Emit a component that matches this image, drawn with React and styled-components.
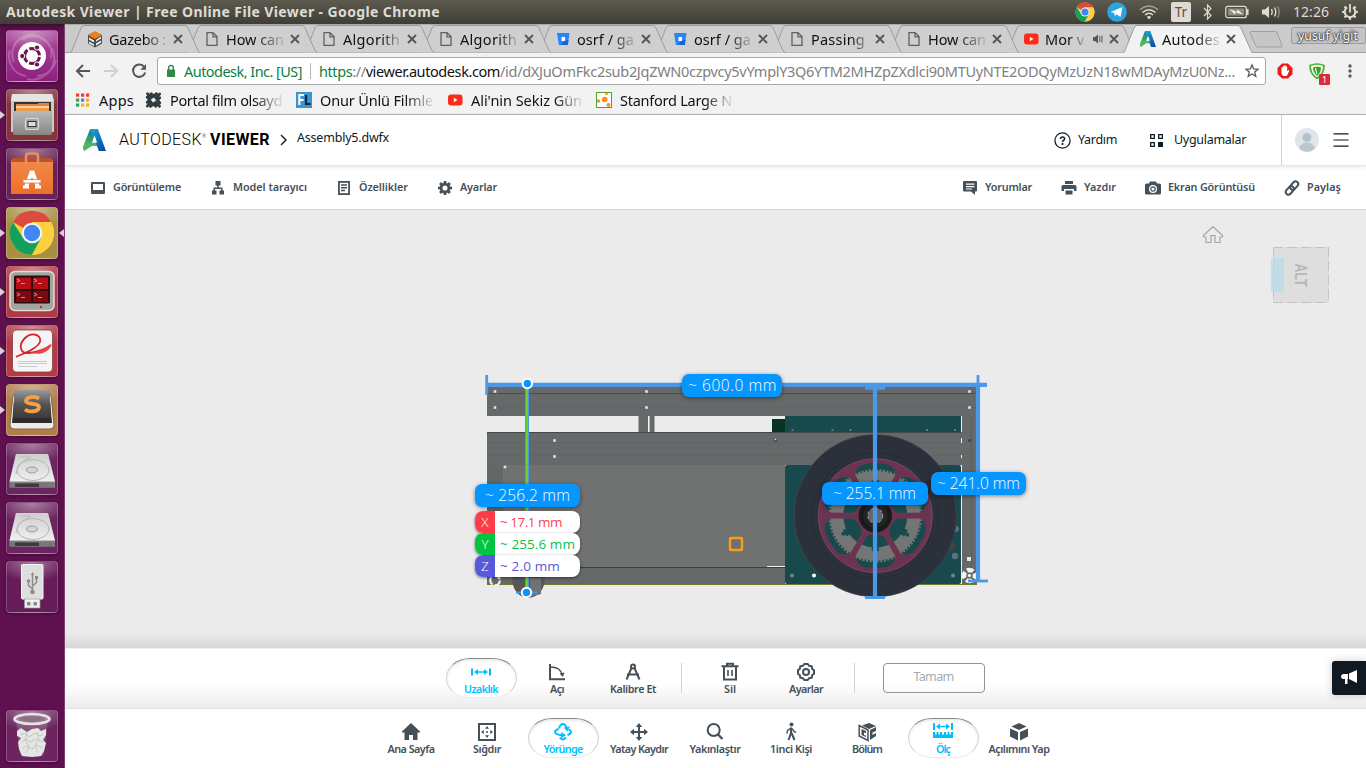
import React, { useLayoutEffect, useRef, useState } from 'react';
import styled, { createGlobalStyle, css } from 'styled-components';

const ubuntu = '"Noto Sans", "Open Sans", sans-serif';
const artifakt = '"Noto Sans", "Open Sans", sans-serif';

const GlobalStyle = createGlobalStyle`
  * { box-sizing: border-box; }
  body { margin: 0; width: 1366px; height: 768px; overflow: hidden; font-family: ${ubuntu}; background: #fff; }
  svg { display: block; flex: none; }
`;

/* ---------- text that tracks itself to a set width ---------- */
const Tracked = styled.span`
  display: inline-block;
  white-space: pre;
  flex: none;
`;

function Fit({ w, children, ...rest }) {
  const ref = useRef(null);
  const [spacing, setSpacing] = useState(0);
  useLayoutEffect(() => {
    const el = ref.current;
    const n = el.textContent.length;
    setSpacing((w - el.getBoundingClientRect().width) / n);
  }, [w]);
  return (
    <Tracked ref={ref} style={{ letterSpacing: spacing + 'px' }} {...rest}>
      {children}
    </Tracked>
  );
}

/* ---------- desktop frame ---------- */
const Desktop = styled.div`
  width: 1366px;
  height: 768px;
  display: flex;
  flex-direction: column;
  overflow: hidden;
`;
const MenuBar = styled.header`
  height: 24px;
  flex: none;
  display: flex;
  align-items: center;
  justify-content: space-between;
  padding: 0 8px 0 6px;
  background: linear-gradient(#5d5a4e, #3e3d38);
  color: #dfdbd2;
`;
const WindowTitle = styled.div`
  font-size: 14px;
  font-weight: 700;
  line-height: 23px;
  height: 24px;
`;
const Indicators = styled.div`
  display: flex;
  align-items: center;
  gap: 12px;
`;
const KeyboardLayout = styled.div`
  width: 20px;
  height: 20px;
  border-radius: 2px;
  background: #dfdbd2;
  color: #55524a;
  font-size: 13.5px;
  line-height: 20px;
  text-align: center;
`;
const Clock = styled.div`
  width: 37px;
  font-size: 14px;
  line-height: 24px;
`;
const Body = styled.div`
  flex: 1;
  display: flex;
  min-height: 0;
`;

/* ---------- launcher ---------- */
const Launcher = styled.nav`
  width: 65px;
  flex: none;
  display: flex;
  flex-direction: column;
  gap: 7px;
  padding: 6px 7px 6px 6px;
  background: linear-gradient(#3d0a35, #5f104f 6px);
  border-right: 1px solid #7d4270;
`;
const Tile = styled.div`
  position: relative;
  width: 52px;
  height: 52px;
  flex: none;
  border-radius: 4px;
  border: 1px solid rgba(255, 255, 255, 0.22);
  background: radial-gradient(ellipse 36px 20px at 50% 0, rgba(255, 255, 255, 0.42), rgba(255, 255, 255, 0)), ${(p) => p.$bg};
  box-shadow: 0 1px 3px rgba(0, 0, 0, 0.35);
  display: flex;
  align-items: center;
  justify-content: center;
  ${(p) => p.$last && css`margin-top: auto;`}
`;
const Running = styled.i`
  position: absolute;
  top: 21px;
  left: -7px;
  border: 4px solid transparent;
  border-left: 5px solid #d9cfd6;
  border-right: 0;
`;
const Focused = styled(Running)`
  left: auto;
  right: -7px;
  border: 4px solid transparent;
  border-right: 5px solid #d9cfd6;
  border-left: 0;
`;

/* ---------- browser chrome ---------- */
const Browser = styled.main`
  flex: 1;
  min-width: 0;
  display: flex;
  flex-direction: column;
`;
const TabStrip = styled.div`
  height: 29px;
  flex: none;
  display: flex;
  padding-left: 5px;
  background: #cbcbcb;
  border-top: 1px solid #aaa;
  box-shadow: inset 0 -1px #a3a3a3;
`;
const Tab = styled.div`
  position: relative;
  width: 129px;
  height: 28px;
  flex: none;
  margin-right: -12px;
  z-index: ${(p) => p.$z};
  display: flex;
  align-items: center;
  padding: 0 0 0 17px;
  color: #111;
`;
const TabShape = styled.svg`
  position: absolute;
  inset: 0;
  z-index: -1;
`;
const TabTitle = styled.div`
  width: 58px;
  height: 24px;
  margin-left: 6px;
  white-space: pre;
  font-size: 14.5px;
  line-height: 24px;
  ${(p) => p.$audible && css`width: 40px;`}
  mask-image: linear-gradient(90deg, #000 ${(p) => p.$solid || 50}%, rgba(0, 0, 0, 0.12));
`;
const TabClose = styled.svg`
  position: absolute;
  right: 16px;
  top: 9px;
`;
const AudioMark = styled.svg`
  margin-left: 8px;
`;
const NewTab = styled.svg`
  margin: 6px 0 0 8px;
`;
const Profile = styled.div`
  width: 76px;
  height: 17px;
  margin: 2px 0 0 7px;
  border: 1px solid #9d9d9d;
  border-radius: 2px;
  background: #c3c3c3;
  color: #fff;
  font-size: 12px;
  line-height: 15px;
  padding-left: 6px;
  text-shadow: 0 0 1px #333, 0 0 1px #333, 0 0 2px #333, 0 0 2px #333;
`;
const AddressRow = styled.div`
  height: 35px;
  flex: none;
  display: flex;
  align-items: center;
  padding: 0 0 0 9px;
  background: #f2f2f2;
`;
const NavIcons = styled.div`
  display: flex;
  gap: 10px;
  width: 83px;
`;
const AddressBox = styled.div`
  width: 1109px;
  height: 28px;
  flex: none;
  display: flex;
  align-items: center;
  padding-left: 8px;
  background: #fff;
  border: 1px solid #a9a9a9;
  border-radius: 3px;
  font-size: 14.5px;
  line-height: 24px;
  color: #808080;
`;
const Owner = styled.div`
  color: #0b8043;
  margin-left: 8px;
  padding-right: 9px;
  margin-right: 8px;
  position: relative;
  &::after {
    content: '';
    position: absolute;
    right: 0;
    top: 4px;
    height: 16px;
    border-right: 1px solid #b5b5b5;
  }
`;
const Secure = styled.span`
  color: #0b8043;
`;
const Host = styled.span`
  color: #111;
`;
const StarIcon = styled.svg`
  margin-left: 9px;
`;
const Extensions = styled.div`
  display: flex;
  align-items: center;
  margin-left: 11px;
`;
const Blocker = styled.div`
  position: relative;
  margin: 0 17px 0 16px;
`;
const Count = styled.span`
  position: absolute;
  left: 10px;
  top: 11px;
  width: 11px;
  height: 11px;
  border-radius: 1px;
  background: #dc2c3c;
  color: #fff;
  font: 9px/11px ${ubuntu};
  text-align: center;
`;
const Bookmarks = styled.div`
  height: 27px;
  flex: none;
  display: flex;
  align-items: center;
  padding: 0 0 2px 10px;
  background: #f2f2f2;
  border-bottom: 1px solid #b4b4b4;
  font-size: 14.5px;
  line-height: 22px;
  color: #111;
`;
const Bookmark = styled.div`
  display: flex;
  align-items: center;
  gap: ${(p) => p.$gap || 8}px;
  margin-right: ${(p) => (p.$faded ? 14 : 11)}px;
  > span {
    ${(p) => p.$faded && css`mask-image: linear-gradient(90deg, #000 75%, rgba(0, 0, 0, 0.1));`}
  }
`;

/* ---------- viewer page ---------- */
const AppHeader = styled.div`
  height: 51px;
  flex: none;
  display: flex;
  align-items: center;
  padding-left: 18px;
  background: #fff;
  border-bottom: 1px solid #e6e6e6;
  box-shadow: 0 1px 4px rgba(0, 0, 0, 0.1);
  z-index: 1;
  color: #0c1a22;
  font-family: ${artifakt};
`;
const Brand = styled.div`
  display: flex;
  align-items: center;
  margin-left: 13px;
  font: 300 16px/24px Roboto, ${artifakt};
  color: #000;
`;
const BrandMark = styled.sup`
  width: 8px;
  font-size: 5px;
  line-height: 6px;
  margin-top: -8px;
`;
const BrandBold = styled.b`
  font-weight: 700;
`;
const Chevron = styled.svg`
  margin-left: -1px;
`;
const FileName = styled.div`
  margin-left: 10px;
  margin-top: -4px;
  font-size: 12.5px;
  line-height: 20px;
`;
const HeaderLinks = styled.div`
  display: flex;
  margin-left: auto;
  align-items: center;
  font-size: 12.5px;
  > svg { margin-right: 7px; }
  > span { margin-right: 32px; margin-top: -2px; }
`;
const Account = styled.div`
  height: 50px;
  width: 85px;
  display: flex;
  align-items: center;
  gap: 14px;
  margin-left: 3px;
  padding-left: 13px;
  border-left: 1px solid #ccd3d8;
`;
const ToolRow = styled.div`
  height: 44px;
  flex: none;
  display: flex;
  justify-content: space-between;
  align-items: center;
  padding: 0 25px;
  background: #fff;
  border-bottom: 1px solid #ccd5dc;
  color: #455059;
  font-family: ${artifakt};
`;
const ToolGroup = styled.div`
  display: flex;
  gap: 29px;
`;
const Tool = styled.div`
  display: flex;
  align-items: center;
  gap: 7px;
  font-size: 10.8px;
  font-weight: 600;
  line-height: 16px;
  > span { margin-top: -2px; }
`;
const Canvas = styled.section`
  position: relative;
  height: 438px;
  flex: none;
  background: #ebebeb;
  overflow: hidden;
  box-shadow: inset 0 -14px 12px -8px rgba(0, 0, 0, 0.1);
`;
const Scene = styled.svg`
  position: absolute;
  inset: 0;
`;
const measureFont = '"Open Sans", "Noto Sans", sans-serif';
const Measure = styled.div`
  position: absolute;
  left: ${(p) => p.$x - 65}px;
  top: ${(p) => p.$y - 210}px;
  width: ${(p) => p.$w}px;
  height: 23px;
  padding-left: ${(p) => p.$pad}px;
  border-radius: 7px;
  background: #0696ff;
  color: #fff;
  font: 300 15.5px/23px ${measureFont};
  box-shadow: 0 1px 4px rgba(0, 0, 0, 0.45);
`;
const AxisList = styled.div`
  position: absolute;
  left: 410px;
  top: 301px;
  width: 105px;
`;
const Axis = styled.div`
  display: flex;
  height: 22px;
  border-radius: 8px;
  overflow: hidden;
  background: #fff;
  color: ${(p) => p.$c};
  font: 400 13.5px/22px ${measureFont};
  box-shadow: 0 1px 3px rgba(0, 0, 0, 0.5);
`;
const AxisName = styled.div`
  width: 20px;
  margin-right: 5px;
  background: ${(p) => p.$c};
  color: #fff;
  text-align: center;
  font-weight: 300;
`;
const CubeFace = styled.div`
  position: absolute;
  left: 1208px;
  top: 37px;
  width: 56px;
  height: 56px;
  background: #dedede;
  display: flex;
  align-items: center;
  justify-content: center;
  background-image: repeating-linear-gradient(90deg, #c3c3c3 0 10px, transparent 10px 14px),
    repeating-linear-gradient(90deg, #c3c3c3 0 10px, transparent 10px 14px),
    repeating-linear-gradient(#c3c3c3 0 10px, transparent 10px 14px),
    repeating-linear-gradient(#c3c3c3 0 10px, transparent 10px 14px);
  background-size: 100% 1px, 100% 1px, 1px 100%, 1px 100%;
  background-position: 0 0, 0 100%, 0 0, 100% 0;
  background-repeat: no-repeat;
  &::before {
    content: '';
    position: absolute;
    left: -2px;
    top: 11px;
    width: 13px;
    height: 34px;
    background: rgba(180, 219, 234, 0.72);
  }
`;
const FaceName = styled.div`
  transform: rotate(90deg) scaleX(0.77);
  font: 700 16px/16px "Liberation Sans", sans-serif;
  color: #b4b8bb;
  margin: 0 3px 0 0;
`;
const HomeButton = styled.svg`
  position: absolute;
  left: 1137px;
  top: 15px;
`;
const Dock = styled.div`
  position: relative;
  height: 60px;
  flex: none;
  display: flex;
  align-items: center;
  background: ${(p) => (p.$shaded ? 'linear-gradient(#fff 60%, #ebebeb)' : '#fff')};
  padding: 0 0 2px ${(p) => p.$left}px;
  border-top: 1px solid ${(p) => (p.$shaded ? '#f0f0f0' : '#e2e2e2')};
  font-family: ${artifakt};
`;
const DockButton = styled.div`
  width: 71px;
  height: 40px;
  flex: none;
  margin: 0 2.5px;
  border-radius: 24px / 20px;
  display: flex;
  flex-direction: column;
  align-items: center;
  color: #455059;
  font-size: 10.8px;
  font-weight: 600;
  line-height: 14px;
  padding-top: 4px;
  > svg { overflow: visible; }
  > div { display: flex; justify-content: center; }
  ${(p) => p.$active && css`
    color: #00bfff;
    background: #fff;
    border: 1px solid;
    border-color: #8a8a8a #d2d2d2 #ececec;
    box-shadow: inset 0 2px 3px rgba(0, 0, 0, 0.08);
    padding-top: 3px;
  `}
`;
const Divider = styled.div`
  height: 30px;
  border-left: 1px solid #ccd5dc;
  margin: 0 ${(p) => p.$right}px 0 ${(p) => p.$gap || 9.5}px;
`;
const DoneButton = styled.div`
  width: 102px;
  height: 30px;
  border: 1px solid #8a969e;
  border-radius: 4px;
  text-align: center;
  font-size: 12.5px;
  line-height: 26px;
  color: #a3abb0;
`;
const Feedback = styled.div`
  position: absolute;
  right: 0;
  top: 12px;
  width: 34px;
  height: 34px;
  border-radius: 3px 0 0 3px;
  background: #111a21;
  box-shadow: 0 0 8px rgba(0, 0, 0, 0.2);
  padding: 7px 0 0 8px;
`;

/* ---------- shared icons ---------- */
const ChromeLogo = ({ size }) => (
  <svg width={size} height={size} viewBox="-24 -24 48 48">
    <circle r="23" fill="#fccf3f" />
    <path d="M0 0L-20-11.500A23 23 0 0 1 20-11.500H0Z" fill="#dd4b3e" />
    <path d="M-20-11.500A23 23 0 0 0 0 23L10 5.500L-9 5.500Z" fill="#12a05c" />
    <path d="M0-10.500H20.300A23 23 0 0 1 0 23L9.500 5Z" fill="#fccf3f" />
    <circle r="10.700" fill="#f4f4f4" />
    <circle r="8.500" fill="#4285f4" />
  </svg>
);
const AutodeskLogo = ({ w, h }) => (
  <svg width={w} height={h} viewBox="0 0 24 22" preserveAspectRatio="none">
    <defs>
      <linearGradient id="adGreen" x1="0.600" y1="0" x2="0.300" y2="1">
        <stop offset="0" stopColor="#0a7fa8" /><stop offset="0.500" stopColor="#30a56a" /><stop offset="1" stopColor="#8fc53d" />
      </linearGradient>
      <linearGradient id="adBlue" x1="0" y1="0" x2="0.700" y2="1">
        <stop offset="0" stopColor="#1fa7d8" /><stop offset="1" stopColor="#0a52a0" />
      </linearGradient>
    </defs>
    <path d="M7.500 0H14L10 13L5.500 19L1 22L0 17.500Z" fill="url(#adGreen)" />
    <path d="M0 18L7.500 13.500H16L17.500 17H9.500L1 22Z" fill="#4fb56a" />
    <path d="M7.500 0H15.500L24 22H16.500L12.500 11.500L9.500 5Z" fill="url(#adBlue)" />
    <path d="M12 6.500L14.700 13.500H9.500Z" fill="#fff" />
  </svg>
);
const PageIcon = () => (
  <svg width="16" height="16" viewBox="0 0 16 16" fill="none" stroke="#606060" strokeWidth="1.300">
    <path d="M3 1.600H9L13 5.600V14.400H3ZM9 1.600V5.800H13" />
  </svg>
);
const YouTube = () => (
  <svg width="16" height="16" viewBox="0 0 16 16"><rect x="1" y="2.500" width="14.500" height="11" rx="3" fill="#ff2a1a" /><path d="M6.800 5.800L10.400 8L6.800 10.200Z" fill="#fff" /></svg>
);
const Bitbucket = () => (
  <svg width="16" height="16" viewBox="0 0 16 16"><path d="M2 2H14.500L12.800 14H3.900Z" fill="#2684ff" /><path d="M10 9H13.500L12.800 14H6Z" fill="#1d62cf" /><rect x="6.500" y="6" width="3.600" height="4" fill="#fff" /></svg>
);
const Gazebo = () => (
  <svg width="16" height="17" viewBox="0 0 16 17"><path d="M8 .5L15 4V12.500L8 16.500L1 12.500V4Z" fill="#4d4d4d" /><path d="M8 .5L15 4L8 8L1 4Z" fill="#f58113" /><path d="M2 6.500L7 9.500V11.500L2 8.500ZM14 5.500V7.500L9 10.500V9ZM2 10.500L7 13.500V15L2 12.500ZM9 12.500L14 9.500V11.500L9 14.500Z" fill="#f5f5f5" /></svg>
);

/* ---------- tabs ---------- */
const tabs = [
  { icon: <Gazebo />, text: 'Gazebo :', w: 57, solid: 60 },
  { icon: <PageIcon />, text: 'How can', w: 58 },
  { icon: <PageIcon />, text: 'Algorith', w: 57, solid: 65 },
  { icon: <PageIcon />, text: 'Algorith', w: 57, solid: 65 },
  { icon: <Bitbucket />, text: 'osrf / ga', w: 57, solid: 60 },
  { icon: <Bitbucket />, text: 'osrf / ga', w: 57, solid: 60 },
  { icon: <PageIcon />, text: 'Passing', w: 54, solid: 70 },
  { icon: <PageIcon />, text: 'How can', w: 58 },
  { icon: <YouTube />, text: 'Mor v', w: 39, audible: true, solid: 60 },
  { icon: <AutodeskLogo w={16} h={16} />, text: 'Autodes', w: 58, active: true, solid: 60 },
];

/* ---------- launcher art ---------- */
const UbuntuArt = () => (
  <svg width="50" height="50" viewBox="-25 -25 50 50">
    <g fill="none" stroke="#fff" strokeOpacity=".22" strokeWidth="2">
      <path d="M-18 6A19 19 0 0 1 12-16M-5 23A22 22 0 0 0 20-8M-22-6A20 20 0 0 0 -6 20M5 20A20 20 0 0 0 24 4M-10-16A18 18 0 0 1 19 2" />
    </g>
    <circle r="14" fill="#fff" />
    <circle r="7.500" fill="none" stroke="#6a1552" strokeWidth="3" strokeDasharray="13.700 2" strokeDashoffset="-1" />
    <g fill="#6a1552" stroke="#fff" strokeWidth="1"><circle cx="-9.800" r="2.600" /><circle cx="5" cy="-8.500" r="2.600" /><circle cx="5" cy="8.500" r="2.600" /></g>
  </svg>
);
const FilesArt = () => (
  <svg width="50" height="50" viewBox="0 0 50 50">
    <defs><linearGradient id="cab" x1="0" y1="0" x2="0" y2="1"><stop offset="0" stopColor="#b9b9b7" /><stop offset="1" stopColor="#868684" /></linearGradient></defs>
    <path d="M5 4H45L47 12V42H4V12Z" fill="#c9c9c6" /><path d="M5 4H45L47 11H4Z" fill="#e4e4e2" />
    <rect x="7" y="12" width="37" height="10" fill="#333" /><path d="M9 14H30L32 13H42V22H9Z" fill="#e9803c" /><path d="M9 16H42V18H9Z" fill="#f6d6a0" /><path d="M9 18H42V22H9Z" fill="#f09a4f" />
    <path d="M6 21H45V43Q45 45 43 45H8Q6 45 6 43Z" fill="url(#cab)" />
    <rect x="18.500" y="28.500" width="13" height="11" rx="2" fill="#a2a2a0" stroke="#dcdcda" strokeWidth="1.200" /><rect x="21" y="31.500" width="8" height="5" fill="#ddd" stroke="#333" />
  </svg>
);
const SoftwareArt = () => (
  <svg width="50" height="50" viewBox="0 0 50 50">
    <defs><linearGradient id="bag" x1="0" y1="0" x2="0" y2="1"><stop offset="0" stopColor="#f08a4a" /><stop offset="1" stopColor="#ee6f28" /></linearGradient></defs>
    <path d="M4 11H46V45H4Z" fill="url(#bag)" /><path d="M5 9H45L46 13H4Z" fill="#b9512a" />
    <path d="M19 15V7Q19 4.500 22 4.500H28Q31 4.500 31 7V15" fill="none" stroke="#ef8d58" strokeWidth="2.500" />
    <path d="M25 22L19 38M25 22L31 38" stroke="#fff" strokeWidth="4" /><rect x="16" y="30.500" width="18" height="3.600" rx="1" fill="#fff" stroke="#ee7431" strokeWidth=".8" /><path d="M16 38H22M28 38H34" stroke="#fff" strokeWidth="3" />
  </svg>
);
const TerminalArt = () => (
  <svg width="50" height="50" viewBox="0 0 50 50">
    <rect x="3" y="4.500" width="44" height="39" rx="5" fill="#a5a4a0" stroke="#deded9" strokeWidth="1.500" />
    <rect x="7" y="8.500" width="36" height="28" rx="1.500" fill="#2b0b0b" />
    <path d="M9 10.500H24V22H9ZM26 10.500H41V22H26Z" fill="#b80d16" /><path d="M9 24H24V35H9ZM26 24H41V35H26Z" fill="#7d0910" />
    <path d="M10 12l3 1.500-3 1.500M14 16.500H18M27 12l3 1.500-3 1.500M31 16.500H35M10 26l3 1.500-3 1.500M14 30.500H18M27 26l3 1.500-3 1.500M31 30.500H35" fill="none" stroke="#f3a7a7" strokeWidth=".8" />
    <circle cx="34" cy="40" r="1.200" fill="#d22" />
  </svg>
);
const ReaderArt = () => (
  <svg width="50" height="50" viewBox="0 0 50 50">
    <rect x="5.500" y="4" width="40" height="42" rx="4" fill="#f5f5f5" stroke="#8a3b3e" strokeWidth=".8" />
    <path d="M9 31C14 28 30 24 33 16C35 8 24 6 18 12C11 19 13 28 22 27C32 26 40 22 44 19" fill="none" stroke="#d8232a" strokeWidth="1.800" />
    <path d="M24 27C32 25.500 40 22 44.500 18C43 26 34 29.500 24 27Z" fill="#e0484c" />
    <path d="M11 35.500H40M11 37.500H40M11 40.500H30" stroke="#c9c9c9" />
  </svg>
);
const SublimeArt = () => (
  <svg width="50" height="50" viewBox="0 0 50 50">
    <defs><linearGradient id="key" x1="0" y1="0" x2="0" y2="1"><stop offset="0" stopColor="#9a9a9a" /><stop offset=".5" stopColor="#555" /><stop offset="1" stopColor="#3a3a3a" /></linearGradient></defs>
    <path d="M6 10L3 40Q3 44 7 44H43Q47 44 47 40L44 10Z" fill="#ececea" stroke="#8a6538" />
    <path d="M8 5H42L45 38H5Z" fill="#2c2c2c" /><path d="M9 5H41Q42.500 5 42.700 7L44 33H6L7.300 7Q7.500 5 9 5Z" fill="url(#key)" />
    <path d="M32 13.500C27 10.500 19 12 19 16C19 20 32 17.500 32 22C32 27 22 27.500 18 24.500" fill="none" stroke="#f7a047" strokeWidth="3.800" />
  </svg>
);
const DiskArt = () => (
  <svg width="50" height="50" viewBox="0 0 50 50">
    <defs><linearGradient id="disk" x1="0" y1="0" x2="0" y2="1"><stop offset="0" stopColor="#cfcfcf" /><stop offset="1" stopColor="#efefef" /></linearGradient></defs>
    <path d="M9 10H41L48 38V43.500H2.500V38Z" fill="#8b8b8b" /><path d="M9 10H41L48 37.500H2.500Z" fill="url(#disk)" />
    <path d="M3 38.500H47.500V43.500H3Z" fill="#777" /><path d="M8 39.500H32V43H8Z" fill="#3b3b3b" />
    <ellipse cx="26" cy="26" rx="16" ry="10.500" fill="none" stroke="#b4b4b4" /><ellipse cx="25" cy="26" rx="5.500" ry="3" fill="#d5d5d5" stroke="#9d9d9d" />
    <path d="M12 13H24L15 18Q9 24 9 30" fill="none" stroke="#bdbdbd" />
  </svg>
);
const UsbArt = () => (
  <svg width="50" height="50" viewBox="0 0 50 50">
    <rect x="14.500" y="2.500" width="21.500" height="34.500" rx="1" fill="#dedede" stroke="#f6f6f6" /><rect x="17.500" y="37" width="15.500" height="9" fill="#f0f0f0" stroke="#999" strokeWidth=".7" />
    <path d="M20 40H23.500V43.500H20ZM26.500 40H30V43.500H26.500Z" fill="#888" />
    <path d="M25.500 12V30M25.500 27L21.500 23.500V19M25.500 24L29.500 20.500V16" fill="none" stroke="#8b8b8b" strokeWidth="1.500" /><circle cx="25.500" cy="30" r="2.300" fill="#8b8b8b" /><circle cx="21.500" cy="19" r="1.800" fill="#8b8b8b" /><path d="M28 14H31V17H28ZM23.700 13L25.500 10L27.300 13Z" fill="#8b8b8b" />
  </svg>
);
const TrashArt = () => (
  <svg width="50" height="50" viewBox="0 0 50 50">
    <path d="M9 9L13 43Q14 46 25 46Q36 46 37 43L41 9Z" fill="#a886a2" fillOpacity=".4" />
    <path d="M10 20L14 17L20 21L25 18L31 17L34 20L39 18V24L36 29L39 32L37 40L34 45L25 46L15 45L12 38L11 31L14 27L10 25Z" fill="#e4e6e3" />
    <g fill="none" stroke="#bfc4bf" strokeWidth=".9"><path d="M13 24l5-2 4 4 6-4 5 3 3-2M15 31l5-3 3 3 6-3 7 3M15 38l4-3 6 3 5-4 6 3M20 22l-2 7 4 6-3 7M30 21l2 7-4 6 3 8" /></g>
    <ellipse cx="25" cy="8" rx="17.500" ry="5" fill="#a58ca2" stroke="#e4e6e4" strokeWidth="2.600" /><ellipse cx="25" cy="8" rx="13" ry="3" fill="#8d6f88" />
  </svg>
);
const launcherItems = [
  { bg: 'linear-gradient(#a94a98, #8f1f80)', art: <UbuntuArt /> },
  { bg: '#84333f', art: <FilesArt />, running: true },
  { bg: '#672358', art: <SoftwareArt /> },
  { bg: '#a98f42', art: <ChromeLogo size={46} />, running: true, focused: true },
  { bg: '#ad3a44', art: <TerminalArt />, running: true },
  { bg: '#b23b45', art: <ReaderArt />, running: true },
  { bg: '#b27d48', art: <SublimeArt />, running: true },
  { bg: '#6c2560', art: <DiskArt /> },
  { bg: '#6c2560', art: <DiskArt /> },
  { bg: '#651c58', art: <UsbArt /> },
  { bg: '#6c2560', art: <TrashArt />, last: true },
];

/* ---------- page icons ---------- */
const Ico = ({ s = 16, children, ...p }) => (
  <svg width={s} height={s} viewBox={`0 0 ${s} ${s}`} fill="currentColor" {...p}>{children}</svg>
);
const gearTeeth = (n, r, w, h) =>
  Array.from({ length: n }, (_, i) => <rect key={i} x={-w / 2} y={-r} width={w} height={h} transform={`rotate(${(360 / n) * i})`} />);
const stroke = { fill: 'none', stroke: 'currentColor' };

const leftTools = [
  ['Görüntüleme', 68, <Ico><path fillRule="evenodd" d="M2 2H14Q15 2 15 3V13Q15 14 14 14H2Q1 14 1 13V3Q1 2 2 2ZM3 4V10H13V4Z" /></Ico>],
  ['Model tarayıcı', 74, <Ico><path d="M5.500 1H10.500V5.500H5.500ZM2 10.500H6.500V14.500H2ZM9.500 10.500H14V14.500H9.500Z" /><path d="M8 5V8M4.200 11V8.200H11.800V11" {...stroke} strokeWidth="1.500" /></Ico>],
  ['Özellikler', 49, <Ico><rect x="2.900" y="1.900" width="10.200" height="12.200" {...stroke} strokeWidth="1.800" /><path d="M5 5H11M5 7.800H11M5 10.600H9" {...stroke} strokeWidth="1.500" /></Ico>],
  ['Ayarlar', 37, <Ico><g transform="translate(8 8)">{gearTeeth(8, 7, 2.800, 3)}<circle r="3.900" {...stroke} strokeWidth="2.700" /></g></Ico>],
];
const rightTools = [
  ['Yorumlar', 47, <Ico><path fillRule="evenodd" d="M2 1H14Q15 1 15 2V10.500Q15 11.500 14 11.500H13V15L9 11.500H2Q1 11.500 1 10.500V2Q1 1 2 1ZM4 3.500V4.800H12.500V3.500ZM4 6V7.200H12.500V6ZM4 8.500V9.600H10V8.500Z" /></Ico>],
  ['Yazdır', 32, <Ico><path d="M4 1H12V4H4ZM2 5H14Q15.500 5 15.500 6.500V11H13V9H3V11H.5V6.500Q.5 5 2 5ZM4.500 10.500H11.500V14.500H4.500Z" /></Ico>],
  ['Ekran Görüntüsü', 87, <Ico><path fillRule="evenodd" d="M5 1.500H11L12 3.500H14.500Q16 3.500 16 5V13Q16 14.500 14.500 14.500H1.500Q0 14.500 0 13V5Q0 3.500 1.500 3.500H4ZM8 5A4 4 0 1 0 8 13A4 4 0 1 0 8 5Z" /><circle cx="8" cy="9" r="2.200" {...stroke} strokeWidth="1.200" /></Ico>],
  ['Paylaş', 34, <Ico><g {...stroke} strokeWidth="2" transform="rotate(-48 8 8)"><rect x="0" y="5.300" width="9.500" height="5.400" rx="2.700" /><rect x="6.500" y="5.300" width="9.500" height="5.400" rx="2.700" /></g></Ico>],
];

const measureTools = [
  ['Uzaklık', 34, <Ico s={20}><path d="M0 6.500H2V13.500H0ZM18 6.500H20V13.500H18ZM3 10L7 7V13ZM17 10L13 7V13Z" /><path d="M5 10H15" {...stroke} strokeWidth="1.400" /></Ico>, true],
  ['Açı', 14, <Ico s={20}><path d="M3 2V17.200H18" {...stroke} strokeWidth="2" /><path d="M3 5Q14 5 15 13" {...stroke} strokeWidth="1.300" /><path d="M12.500 11.500L17.500 10.500L15.800 15Z" /></Ico>],
  ['Kalibre Et', 46, <Ico s={20}><path d="M8.500 6L3.500 17.500M11.500 6L16.500 17.500M4 12.500H16" {...stroke} strokeWidth="2" /><circle cx="10" cy="4.500" r="2" {...stroke} strokeWidth="2" /></Ico>],
];
const editTools = [
  ['Sil', 12, <Ico s={20}><path d="M1.500 4.300H18.500M7 4V1.800H13V4M4 5V17.500H16V5" {...stroke} strokeWidth="2" /><path d="M8 8V14M12 8V14" {...stroke} strokeWidth="1.600" /></Ico>],
  ['Ayarlar', 34, <Ico s={20}><g transform="translate(10 10)" {...stroke} strokeWidth="2"><circle r="3" /><path strokeLinejoin="round" d="M-1.800-8H1.800L3-6.200L5.700-5.700L6.200-3L8-1.800V1.800L6.200 3L5.700 5.700L3 6.200L1.800 8H-1.800L-3 6.200L-5.700 5.700L-6.200 3L-8 1.800V-1.800L-6.200-3L-5.700-5.700L-3-6.200Z" /></g></Ico>],
];
const viewTools = [
  ['Ana Sayfa', 47, <Ico s={20}><path d="M10 1L19 9.500V10.500H16.500V18H12V13H8V18H3.500V10.500H1V9.500Z" /></Ico>],
  ['Sığdır', 28, <Ico s={20}><rect x="2" y="2" width="16" height="16" {...stroke} strokeWidth="2" /><path d="M10 4L12 6.800H8ZM10 16L12 13.200H8ZM4 10L6.800 8V12ZM16 10L13.200 8V12Z" /><circle cx="10" cy="10" r="1" /></Ico>],
  ['Yörünge', 39, <Ico s={20}><g {...stroke} strokeWidth="2"><path d="M6.200 6.500Q7 2 10 2Q12.500 2.200 13.500 5.500M5.500 7Q2 8 2 10.300Q2.800 13 9 13.200M15.800 7.500Q18 8.500 18 10.200Q17.800 12 14.500 13M6.800 15.500Q9.500 19.500 12.800 15.500" /></g><path d="M10.700 5.500L17 4.500L14.300 9.500ZM8.300 10L13 13.200L8.300 16.300Z" /></Ico>, true],
  ['Yatay Kaydır', 58, <Ico s={20}><path d="M10 3V17M3 10H17" {...stroke} strokeWidth="2" /><path d="M10 1L13.200 5H6.800ZM10 19L13.200 15H6.800ZM1 10L5 6.800V13.200ZM19 10L15 6.800V13.200Z" /></Ico>],
  ['Yakınlaştır', 51, <Ico s={20}><circle cx="8.700" cy="8" r="6" {...stroke} strokeWidth="2" /><path d="M13 12.500L17.500 17" {...stroke} strokeWidth="2.400" /></Ico>],
  ['1inci Kişi', 42, <Ico s={20}><circle cx="10.500" cy="2.500" r="2" /><path d="M10 5.500V11L7.500 18M10.500 11L13.500 18" {...stroke} strokeWidth="2" /><path d="M10 6L6.500 8.500L6 11.500M11 6.500L13 9.500L15 10.500" {...stroke} strokeWidth="1.500" /></Ico>],
  ['Bölüm', 30, <Ico s={20}><path d="M5 3.500L12 1L19 4L12 7ZM13 8L19 5V9L15.500 10.500V13L19 11V14L13 18Z" /><path d="M2.200 3.500L11 8V18.500L2.200 14Z" {...stroke} strokeWidth="1.500" /><path d="M4.500 7L9 9V11L7 10.500V13L9 13.500V15L4.500 13Z" /></Ico>],
  ['Ölç', 14, <Ico s={20}><path d="M0 1H2V8H0ZM18 1H20V8H18ZM3 4.500L7 1.500V7.500ZM17 4.500L13 1.500V7.500ZM0 10H2V12.500H3.500V10H5.500V12.500H7V10H9V12.500H11V10H13V12.500H14.500V10H16.500V12.500H18V10H20V16H0Z" /><path d="M5 4.500H15" {...stroke} strokeWidth="1.400" /></Ico>, true],
  ['Açılımını Yap', 61, <Ico s={20}><path d="M10 1L17.500 4.500L10 8L2.500 4.500ZM1 6.500L9 10V18.500L1 14.500ZM19 6.500L11 10V18.500L19 14.500Z" /></Ico>],
];

const Dots = ({ at, fill = '#e2e5e5', r = 1.300 }) => at.map(([x, y]) => <rect key={x + '-' + y} x={x - r} y={y - r} width={r * 2} height={r * 2} fill={fill} />);

const Wheel = () => (
  <g transform="translate(875.300 515.700)">
    <circle r="81" fill="#2b303b" stroke="#3b424d" strokeWidth="1" />
    <circle r="63" fill="none" stroke="#262b35" strokeWidth="1" />
    <circle r="57.500" fill="#184a4d" />
    <circle r="38.500" fill="none" stroke="#737675" strokeWidth="13" />
    <circle r="45.800" fill="none" stroke="#737675" strokeWidth="2" strokeDasharray="2 1.600" />
    <circle r="33" fill="none" stroke="#184a4d" strokeWidth="5" strokeDasharray="7 27.560" strokeDashoffset="-13.700" />
    <g fill="#184a4d"><circle cx="-32" cy="18" r="2" /><circle cx="32" cy="19" r="2" /><circle cx="0" cy="-37" r="2" /></g>
    <circle r="54.700" fill="none" stroke="#6a3350" strokeWidth="4.600" />
    <circle r="57" fill="none" stroke="#8f4868" strokeWidth=".7" />
    {[0, 60, 120, 180, 240, 300].map((a) => (
      <path key={a} transform={`rotate(${a})`} fill="#6a3350" stroke="#7d3a5b" strokeWidth=".4" d="M16-9Q19-3.200 23-2.600L45-2.900Q50-4.500 51.500-14L54-16V16L51.500 14Q50 4.500 45 2.900L23 2.600Q19 3.200 16 9Z" />
    ))}
    <circle r="18.500" fill="#6a3350" />
    <circle r="16.700" fill="#1a1a1a" /><circle r="12" fill="#242424" /><circle r="7.500" fill="#63666a" stroke="#9aa1a5" strokeWidth="1" strokeDasharray="3 2" />
  </g>
);

const Model = () => (
  <Scene width="1301" height="438" viewBox="65 210 1301 438">
    {/* frame and side plates */}
    <rect x="487" y="386" width="491" height="30" fill="#666969" />
    <path d="M487 393.500H976" stroke="#4c4e4e" /><path d="M487 407.500H976" stroke="#626565" />
    <path d="M638.500 416H648V432H638.500ZM649.500 416H654.500V432H649.500Z" fill="#666969" /><path d="M648.700 416V432" stroke="#f7f7f7" />
    <rect x="487" y="432" width="16" height="152" fill="#646767" />
    <rect x="503" y="465" width="282" height="102" fill="#707271" />
    <rect x="487" y="567" width="298" height="17" fill="#666969" /><path d="M503 567.500H785" stroke="#3c3f3f" />
    <path d="M767 566.500H785" stroke="#f2f2f2" />
    <rect x="785" y="416" width="176" height="17" fill="#184a4d" /><rect x="785" y="465" width="176" height="119" rx="2" fill="#184a4d" />
    <rect x="772" y="419" width="13" height="13" fill="#0a3328" />
    <rect x="962" y="416" width="15" height="168" fill="#666969" /><path d="M971.500 416V584" stroke="#5a5c5c" />
    <rect x="487" y="432" width="475" height="33" fill="#666969" /><path d="M487 432.500H961" stroke="#454848" /><path d="M487 442.500H961M487 455.500H961" stroke="#616464" />
    <path d="M961.500 417V430M961.500 438V443M961.500 455V458M961.500 466V566" stroke="#f2f2f2" />
    <path d="M487 584.500H977" stroke="#77772c" />
    <Dots at={[[495, 391.500], [495, 407.500], [646.500, 391.500], [646.500, 407.500], [554.500, 440.500], [554.500, 456.500], [505, 467], [969.500, 391.500], [969.500, 407.500]]} />
    <Dots at={[[775.500, 440.500], [969.500, 440.500]]} fill="#24514f" /><Dots at={[[775.500, 456.500], [969.500, 456.500]]} fill="#6b6350" />
    <Dots at={[[775.500, 439.500]]} r={0.700} />
    <Dots at={[[792.500, 430], [832.500, 430], [850.500, 430], [927, 430], [955, 430]]} r={1} fill="#67767a" />
    <circle cx="792" cy="575.500" r="2" fill="#778083" /><circle cx="814" cy="575.500" r="2" fill="#fff" /><circle cx="953" cy="575.500" r="2" fill="#778083" />
    <circle cx="956" cy="529" r="3" fill="#56737c" /><circle cx="955" cy="556" r="3.200" fill="#56737c" /><circle cx="951" cy="546" r="5" fill="#3e4440" />
    <circle cx="969.500" cy="575.500" r="5.500" fill="none" stroke="#f2f2f2" strokeWidth="4.500" strokeDasharray="6.400 2.240" strokeDashoffset="3.200" /><circle cx="969.500" cy="575.500" r="1.600" fill="#fff" /><Dots at={[[969, 559]]} r={2} />
    <circle cx="495" cy="580.500" r="4.800" fill="none" stroke="#f2f2f2" strokeWidth="2.200" strokeDasharray="8 2" />
    <path d="M512 576H545Q545 596 528 598Q512 596 512 576Z" fill="#555858" /><path d="M530 578H541V594L530 597Z" fill="#707373" />
    <Wheel />
    {/* dimension lines */}
    <g fill="none" stroke="#4b98e6">
      <path d="M486 384.900H987" strokeWidth="4.200" /><path d="M486.700 375V395M978 375V384" strokeWidth="2.800" />
      <path d="M978 384V582" strokeWidth="4.200" /><path d="M968 581H988" strokeWidth="2.800" />
      <path d="M875 386V599" strokeWidth="4.200" /><path d="M865 388.300H885M865 597.500H885" strokeWidth="3" />
      <path d="M527 384V592" strokeWidth="4" /><path d="M516 592.500H537" strokeWidth="2" />
    </g>
    <path d="M527 384V592" stroke="#62d42c" strokeWidth="2" />
    {[[527.300, 383.500], [526.500, 592.500]].map(([x, y]) => <circle key={y} cx={x} cy={y} r="4.700" fill="#0696ff" stroke="#fff" strokeWidth="2" />)}
    <rect x="730" y="538" width="12" height="12" rx=".8" fill="none" stroke="#ff9d14" strokeWidth="2.300" />
  </Scene>
);

const DockItem = ({ item: [label, w, icon, active] }) => (
  <DockButton $active={active}>{icon}<div><Fit w={w}>{label}</Fit></div></DockButton>
);

export default function App() {
  return (
    <Desktop>
      <GlobalStyle />
      <MenuBar>
        <WindowTitle><Fit w={434}>Autodesk Viewer | Free Online File Viewer - Google Chrome</Fit></WindowTitle>
        <Indicators>
          <ChromeLogo size={20} />
          <svg width="20" height="20" viewBox="0 0 20 20"><circle cx="10" cy="10" r="9.800" fill="#2ba4de" /><path d="M3.500 10L15.500 5L13.500 15L9.500 12.300L7.800 14.200L7.300 11Z" fill="#fff" /></svg>
          <svg width="20" height="20" viewBox="0 0 20 20" fill="none" stroke="#dfdbd2" strokeWidth="1.500"><path d="M1 7.500Q10 .5 19 7.500" stroke="#a8a59b" /><path d="M3.500 10.500Q10 5 16.500 10.500M6 13Q10 9.500 14 13" /><path d="M7.800 15Q10 13 12.200 15L10 17.500Z" fill="#dfdbd2" stroke="none" /></svg>
          <KeyboardLayout>Tr</KeyboardLayout>
          <svg width="10" height="18" viewBox="0 0 10 18" fill="none" stroke="#dfdbd2" strokeWidth="1.200"><path d="M1 5L8 12.500L4.500 16V2L8 5.500L1 13" /></svg>
          <svg width="24" height="16" viewBox="0 0 24 16"><rect x=".8" y="2.300" width="20.500" height="11.400" rx="2" fill="none" stroke="#dfdbd2" strokeWidth="1.300" /><rect x="3" y="4.500" width="16" height="7" fill="#918e85" /><rect x="22" y="5" width="1.600" height="6" fill="#dfdbd2" /><path d="M4.500 5L12 8L12.500 5.500L18 10.500L10.500 8.300L10 10.500Z" fill="#f4f1ea" /></svg>
          <svg width="20" height="18" viewBox="0 0 20 18" fill="#dfdbd2"><path d="M1 6.500H4L8 3V15L4 11.500H1Z" /><path d="M10.500 6Q12 9 10.500 12M13.500 4.500Q16 9 13.500 13.500" fill="none" stroke="#dfdbd2" strokeWidth="1.400" /><path d="M16.500 3Q20 9 16.500 15" fill="none" stroke="#8f8c82" strokeWidth="1.400" /></svg>
          <Clock><Fit w={36}>12:26</Fit></Clock>
          <svg width="16" height="18" viewBox="-8 -9 16 18" fill="#dfdbd2">{gearTeeth(8, 7.800, 2.200, 3).filter((_, i) => i !== 0)}<path d="M-3-4.500A5.300 5.300 0 1 0 3-4.500" fill="none" stroke="#dfdbd2" strokeWidth="2" /><rect x="-.9" y="-8" width="1.800" height="8.500" /></svg>
        </Indicators>
      </MenuBar>
      <Body>
        <Launcher>
          {launcherItems.map((it, i) => (
            <Tile key={i} $bg={it.bg} $last={it.last}>
              {it.running && <Running />}
              {it.focused && <Focused />}
              {it.art}
            </Tile>
          ))}
        </Launcher>
        <Browser>
          <TabStrip>
            {tabs.map((t, i) => (
              <Tab key={i} $z={t.active ? 20 : 10 - i}>
                <TabShape width="130" height="28" viewBox="0 0 130 28">
                  <path d="M0 27.500Q1.200 27.500 2 25.500L11 3Q12 .5 14 .5H115Q117 .5 118 3L128 25.500Q129 27.500 130 27.500" fill={t.active ? '#f2f2f2' : '#cfcfcf'} stroke="#9c9c9c" />
                  {t.active && <path d="M1.500 27.600H128.500" stroke="#f2f2f2" strokeWidth="1.200" />}
                </TabShape>
                {t.icon}
                <TabTitle $audible={t.audible} $solid={t.solid}><Fit w={t.w}>{t.text}</Fit></TabTitle>
                {t.audible && <AudioMark width="10" height="10" viewBox="0 0 10 10" fill="#555"><path d="M0 3H2L5 .5V9.500L2 7H0Z" /><path d="M6.800 2V8M9 1.500V8.500" stroke="#555" /></AudioMark>}
                <TabClose width="10" height="10" viewBox="0 0 10 10" stroke="#565656" strokeWidth="1.900"><path d="M1 1L9 9M9 1L1 9" /></TabClose>
              </Tab>
            ))}
            <NewTab width="36" height="17" viewBox="0 0 36 17"><path d="M3.500 .5H27Q28.500 .5 29.200 2L34 14.500Q34.500 16 33 16H9.500Q8.200 16 7.500 14.500L2.200 2Q1.800 .5 3.500 .5Z" fill="#c6c6c6" stroke="#9f9f9f" /></NewTab>
            <Profile><Fit w={60}>yusuf yigit</Fit></Profile>
          </TabStrip>
          <AddressRow>
            <NavIcons>
              <svg width="18" height="18" viewBox="0 0 18 18" fill="none" stroke="#575757" strokeWidth="2"><path d="M16 9H3.500M9 3L3 9L9 15" /></svg>
              <svg width="18" height="18" viewBox="0 0 18 18" fill="none" stroke="#d0d0d0" strokeWidth="2"><path d="M2 9H14.500M9 3L15 9L9 15" /></svg>
              <svg width="18" height="18" viewBox="0 0 18 18" fill="none" stroke="#575757" strokeWidth="2"><path d="M14.300 5A6.200 6.200 0 1 0 15.200 10.500" /><path d="M16 2V7.800H10.200Z" fill="#575757" stroke="none" /></svg>
            </NavIcons>
            <AddressBox>
              <svg width="10" height="14" viewBox="0 0 10 14"><rect x="1" y="5.500" width="8" height="7.500" fill="#2d8b46" /><path d="M2.700 6V3.500Q2.700 1.500 5 1.500Q7.300 1.500 7.300 3.500V6" fill="none" stroke="#2d8b46" strokeWidth="1.400" /></svg>
              <Owner><Fit w={118}>Autodesk, Inc. [US]</Fit></Owner>
              <Fit w={181}><Secure>https</Secure>://<Host>viewer.autodesk.com</Host></Fit>
              <Fit w={735}>/id/dXJuOmFkc2sub2JqZWN0czpvcy5vYmplY3Q6YTM2MHZpZXdlci90MTUyNTE2ODQyMzUzN18wMDAyMzU0Nz...</Fit>
              <StarIcon width="16" height="16" viewBox="-8 -8 16 16"><path d="M0-6L1.700-2L6-1.700L2.700 1L3.800 5.300L0 3L-3.800 5.300L-2.700 1L-6-1.700L-1.700-2Z" fill="none" stroke="#5a5a5a" strokeWidth="1.300" /></StarIcon>
            </AddressBox>
            <Extensions>
              <svg width="16" height="16" viewBox="0 0 16 16"><path d="M5 .5H11L15.500 5V11L11 15.500H5L.5 11V5Z" fill="#f01818" /><path d="M4.500 8.500V4.500Q5.200 3.700 5.900 4.500V3.200Q6.600 2.400 7.300 3.200V2.600Q8 1.900 8.700 2.600V3.600Q9.500 3 10.200 3.900V8.500L11.300 7Q12.600 7 12 8.500L9.800 13H6.200L4.500 11Z" fill="#fff" /></svg>
              <Blocker>
                <svg width="16" height="16" viewBox="0 0 16 16" fill="none" stroke="#46b52e"><path d="M1 2.500Q8-.5 15 2.500Q15 11 8 15.500Q1 11 1 2.500Z" strokeWidth="1.700" /><path d="M4 4.500Q8 3 12 4.500Q12 10 8 13Q4 9 4 4.500Z" fill="#2fa51f" stroke="none" /><path d="M6.500 5Q7 8 8 11" stroke="#fff" strokeWidth="1.200" /></svg>
                <Count>1</Count>
              </Blocker>
              <svg width="16" height="16" viewBox="0 0 16 16" fill="#5a5a5a"><circle cx="8" cy="3" r="1.700" /><circle cx="8" cy="8" r="1.700" /><circle cx="8" cy="13" r="1.700" /></svg>
            </Extensions>
          </AddressRow>
          <Bookmarks>
            <Bookmark $gap={9}>
              <svg width="15" height="14" viewBox="0 0 15 14">{['#f33', '#f33', '#f33', '#2fa35b', '#4285f4', '#fbb11c', '#2fa35b', '#fbb11c', '#fbb11c'].map((c, i) => <rect key={i} x={1 + (i % 3) * 5} y={Math.floor(i / 3) * 5 + .5} width="3.200" height="3.200" fill={c} />)}</svg>
              <Fit w={35}>Apps</Fit>
            </Bookmark>
            <Bookmark $faded>
              <svg width="17" height="16" viewBox="-8 -8 16 16" fill="none" stroke="#2e3a40" strokeWidth="2.800" strokeLinecap="round">{[0, 90, 180, 270].map((a) => <path key={a} transform={`rotate(${a})`} d="M-6-6.200L-2.200-2.200M-2.300-6.300L0-3.800L3-6.300" />)}</svg>
              <Fit w={112}>Portal film olsayd</Fit>
            </Bookmark>
            <Bookmark $faded>
              <svg width="16" height="16" viewBox="0 0 16 16"><rect width="16" height="16" fill="#3a94d0" /><path d="M3.300 13V3H8M3.300 8H7.500" fill="none" stroke="#fff" strokeWidth="2" /><path d="M10 3V12H14.500" fill="none" stroke="#12293c" strokeWidth="2.200" /></svg>
              <Fit w={113}>Onur Ünlü Filmle</Fit>
            </Bookmark>
            <Bookmark $faded><YouTube /><Fit w={111}>Ali'nin Sekiz Gün</Fit></Bookmark>
            <Bookmark $faded>
              <svg width="16" height="16" viewBox="0 0 16 16"><rect x=".5" y=".5" width="15" height="15" fill="#fff" stroke="#4aa52c" /><g fill="#ff8b1a"><circle cx="8.700" cy="7.500" r="2.800" /><circle cx="2.500" cy="9" r="1.800" /><circle cx="12.500" cy="13" r="2" /><circle cx="10.500" cy="2" r="1.300" /></g></svg>
              <Fit w={112}>Stanford Large N</Fit>
            </Bookmark>
          </Bookmarks>
          <AppHeader>
            <AutodeskLogo w={23} h={22} />
            <Brand><Fit w={83}>AUTODESK</Fit><BrandMark>®</BrandMark><BrandBold><Fit w={60}>VIEWER</Fit></BrandBold></Brand>
            <Chevron width="18" height="14" viewBox="0 0 18 14" fill="none" stroke="#222" strokeWidth="1.500"><path d="M12 2L17 7L12 12" /></Chevron>
            <FileName><Fit w={92}>Assembly5.dwfx</Fit></FileName>
            <HeaderLinks>
              <svg width="17" height="17" viewBox="0 0 17 17"><circle cx="8.500" cy="8.500" r="7.600" fill="none" stroke="#17232b" strokeWidth="1.300" /><path d="M6.500 7Q6.500 5 8.600 5Q10.600 5 10.600 6.800Q10.600 8 9.300 8.500Q8.500 9 8.500 10" fill="none" stroke="#17232b" strokeWidth="1.500" /><circle cx="8.500" cy="12" r="1" /></svg>
              <Fit w={39}>Yardım</Fit>
              <svg width="18" height="15" viewBox="0 0 18 15" fill="none" stroke="#0c1a22" strokeWidth="1.300"><path d="M1.700 1.700H5.300V5.300H1.700ZM9.700 1.700H13.300V5.300H9.700ZM1.700 9.700H5.300V13.300H1.700Z" /><path d="M9.700 9.700H13.300V13.300H9.700Z" fill="#0c1a22" /></svg>
              <Fit w={72}>Uygulamalar</Fit>
            </HeaderLinks>
            <Account>
              <svg width="24" height="24" viewBox="0 0 24 24"><circle cx="12" cy="12" r="12" fill="#dfe5e8" /><circle cx="12" cy="9.500" r="4.500" fill="#b4c3cb" /><path d="M4.500 21Q4.500 15 12 14.500Q19.500 15 19.500 21Q12 26.500 4.500 21Z" fill="#b9c7cf" /></svg>
              <svg width="16" height="14" viewBox="0 0 16 14" stroke="#0c1a22" strokeWidth="1.200"><path d="M.5 .8H15.500M.5 7H15.500M.5 13.200H15.500" /></svg>
            </Account>
          </AppHeader>
          <ToolRow>
            {[leftTools, rightTools].map((group, i) => (
              <ToolGroup key={i}>
                {group.map(([label, w, icon]) => <Tool key={label}>{icon}<Fit w={w}>{label}</Fit></Tool>)}
              </ToolGroup>
            ))}
          </ToolRow>
          <Canvas>
            <Model />
            <HomeButton width="22" height="19" viewBox="0 0 22 19" fill="none" stroke="#a5a5a5" strokeWidth="1.200"><path d="M11 1.500L1.500 10.500V12H4V17.500H9V10.500H13V17.500H18V12H20.500V10.500Z" /></HomeButton>
            <CubeFace><FaceName>ALT</FaceName></CubeFace>
            <Measure $x={682} $y={374} $w={100} $pad={6}><Fit w={89}>~ 600.0 mm</Fit></Measure>
            <Measure $x={475} $y={484} $w={105} $pad={10}><Fit w={85}>~ 256.2 mm</Fit></Measure>
            <Measure $x={822} $y={482} $w={106} $pad={11}><Fit w={83}>~ 255.1 mm</Fit></Measure>
            <Measure $x={931} $y={472} $w={95} $pad={6}><Fit w={83}>~ 241.0 mm</Fit></Measure>
            <AxisList>
              <Axis $c="#ff4050"><AxisName $c="#ff3b49">X</AxisName><Fit w={62}>~ 17.1 mm</Fit></Axis>
              <Axis $c="#08c24a"><AxisName $c="#00c53e">Y</AxisName><Fit w={75}>~ 255.6 mm</Fit></Axis>
              <Axis $c="#5a5ad6"><AxisName $c="#5858dc">Z</AxisName><Fit w={60}>~ 2.0 mm</Fit></Axis>
            </AxisList>
          </Canvas>
          <Dock $shaded $left={378}>
            {measureTools.map((t) => <DockItem key={t[0]} item={t} />)}
            <Divider $right={10} $gap={10} />
            {editTools.map((t) => <DockItem key={t[0]} item={t} />)}
            <Divider $right={28} />
            <DoneButton><Fit w={40}>Tamam</Fit></DoneButton>
            <Feedback><svg width="20" height="20" viewBox="0 0 20 20" fill="#fff"><path d="M3 6H8V11H7.500V16H5V11H3Q1 10.500 1 8.500Q1 6.500 3 6ZM9 5.500L17 2V15L9 11Z" /></svg></Feedback>
          </Dock>
          <Dock $left={308}>
            {viewTools.map((t) => <DockItem key={t[0]} item={t} />)}
          </Dock>
        </Browser>
      </Body>
    </Desktop>
  );
}
